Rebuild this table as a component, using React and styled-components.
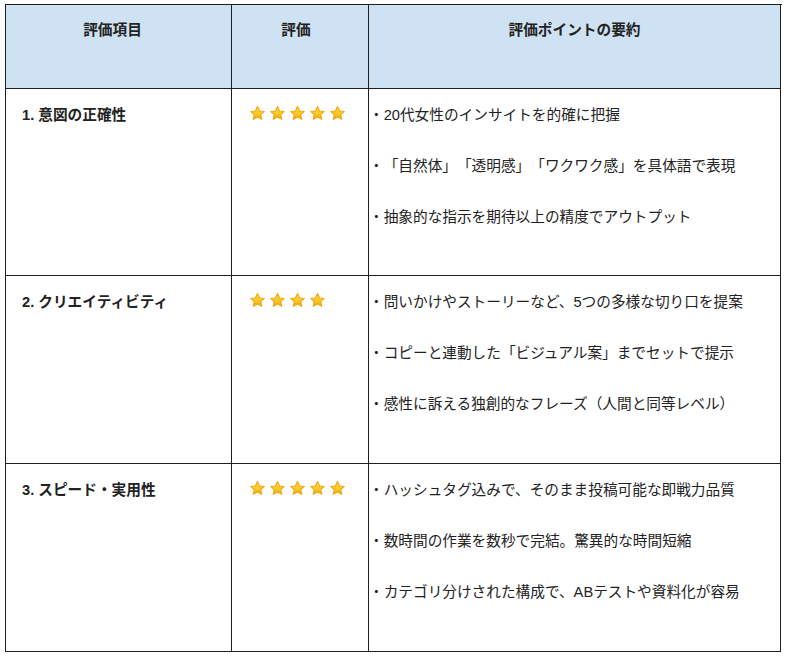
import React from "react";
import styled, { createGlobalStyle } from "styled-components";

const Global = createGlobalStyle`
  html, body { margin: 0; padding: 0; background: #ffffff; }
  body {
    font-family: "Liberation Sans", Arial, "Noto Sans CJK JP", sans-serif;
    color: #222222;
    text-spacing-trim: space-all;
  }
`;

const Page = styled.div`
  padding: 4px 0 0 5px;
`;

const Table = styled.div`
  display: grid;
  grid-template-columns: 226px 137px 412px;
  grid-template-rows: 84px 187px 188px 188px;
  width: 776px;
  border-top: 1px solid #1f1f1f;
  border-left: 1px solid #1f1f1f;
`;

const Cell = styled.div`
  box-sizing: border-box;
  border-right: 1px solid #1f1f1f;
  border-bottom: 1px solid #1f1f1f;
  background: ${(p) => (p.$head ? "#cfe2f3" : "#ffffff")};
  font-size: 14.67px;
  line-height: 20px;
  padding: ${(p) => p.$pad || "15px 16px 0"};
  text-align: ${(p) => (p.$center ? "center" : "left")};
  font-weight: ${(p) => (p.$bold ? 700 : 400)};
  text-spacing-trim: space-all;
`;

const Title = styled.div`
  font-weight: 700;
  color: #222;
  padding-top: 1px;
`;

const Stars = styled.div`
  display: flex;
  gap: 3px;
  padding-top: 1px;
`;

const BulletList = styled.ul`
  list-style: none;
  margin: 0;
  padding: 0;
  display: flex;
  flex-direction: column;
  gap: 31px;
`;

const Bullet = styled.li`
  color: #222;
  white-space: nowrap;
`;

const Star = () => (
  <svg width="17" height="17" viewBox="0 0 24 24">
    <defs>
      <linearGradient id="sg" x1="0" y1="0" x2="0" y2="1">
        <stop offset="0" stopColor="#ffd84a" />
        <stop offset="0.6" stopColor="#f9c623" />
        <stop offset="1" stopColor="#eaa10c" />
      </linearGradient>
    </defs>
    <path
      d="M12 2.2 L14.9 8.4 L21.6 9.1 L16.6 13.6 L18 20.3 L12 16.9 L6 20.3 L7.4 13.6 L2.4 9.1 L9.1 8.4 Z"
      fill="url(#sg)"
      stroke="#eeaa14"
      strokeWidth="1.6"
      strokeLinejoin="round"
    />
  </svg>
);

const rows = [
  {
    title: "1. 意図の正確性",
    stars: 5,
    points: [
      "・20代女性のインサイトを的確に把握",
      "・「自然体」「透明感」「ワクワク感」を具体語で表現",
      "・抽象的な指示を期待以上の精度でアウトプット",
    ],
  },
  {
    title: "2. クリエイティビティ",
    stars: 4,
    points: [
      "・問いかけやストーリーなど、5つの多様な切り口を提案",
      "・コピーと連動した「ビジュアル案」までセットで提示",
      "・感性に訴える独創的なフレーズ（人間と同等レベル）",
    ],
  },
  {
    title: "3. スピード・実用性",
    stars: 5,
    points: [
      "・ハッシュタグ込みで、そのまま投稿可能な即戦力品質",
      "・数時間の作業を数秒で完結。驚異的な時間短縮",
      "・カテゴリ分けされた構成で、ABテストや資料化が容易",
    ],
  },
];

export default function App() {
  return (
    <>
      <Global />
      <Page>
        <Table>
          <Cell $head $center $bold $pad="15px 12px 0 0">評価項目</Cell>
          <Cell $head $center $bold $pad="15px 8px 0 0">評価</Cell>
          <Cell $head $center $bold $pad="15px 0 0 0">評価ポイントの要約</Cell>
          {rows.map((r) => (
            <React.Fragment key={r.title}>
              <Cell $pad="15px 10px 0 16px">
                <Title>{r.title}</Title>
              </Cell>
              <Cell $pad="15px 10px 0 17px">
                <Stars>
                  {Array.from({ length: r.stars }).map((_, i) => (
                    <Star key={i} />
                  ))}
                </Stars>
              </Cell>
              <Cell $pad="16px 4px 0 0">
                <BulletList>
                  {r.points.map((p) => (
                    <Bullet key={p}>{p}</Bullet>
                  ))}
                </BulletList>
              </Cell>
            </React.Fragment>
          ))}
        </Table>
      </Page>
    </>
  );
}
